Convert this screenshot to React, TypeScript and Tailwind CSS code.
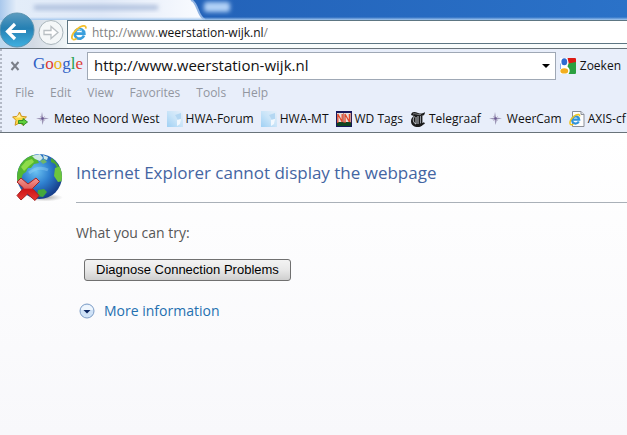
import { ReactNode, useState } from 'react'

const MENUS = ['File', 'Edit', 'View', 'Favorites', 'Tools', 'Help']

const GOOGLE = [
  ['G', 'text-[#2f5fc4]'],
  ['o', 'text-[#dc3b34]'],
  ['o', 'text-[#eeb211]'],
  ['g', 'text-[#2f5fc4]'],
  ['l', 'text-[#1fa04f]'],
  ['e', 'text-[#dc3b34]'],
]

function IeIcon() {
  return (
    <svg viewBox="0 0 16 16" className="h-4 w-4 shrink-0">
      <path d="M13 10.600A4.800 4.800 0 1 1 13.300 8.600H5.200" fill="none" stroke="#3a9fdc" strokeWidth="2.700" />
      <path d="M4.600 6.400A4 4 0 0 1 11 5.600" fill="none" stroke="#8fd3f7" strokeWidth="1" />
      <path d="M1.600 14.200C-.8 11.600 3.600 5 8.600 2.200 12 .3 15.600.1 14.700 3.600" fill="none" stroke="#f3bf2c" strokeWidth="1.800" />
      <path d="M1.600 14.200c1 .9 2.600.2 4-.7" fill="none" stroke="#f3bf2c" strokeWidth="1.600" />
    </svg>
  )
}

function IePageIcon() {
  return (
    <svg viewBox="0 0 16 16" className="h-4 w-4 shrink-0">
      <path d="M3.500.5h8.500l3 3v12H3.500z" fill="#fdfdfd" stroke="#8b8f98" />
      <path d="M12 .5v3h3" fill="#e3e6ea" stroke="#8b8f98" />
      <path d="M9.800 10.600A3.600 3.600 0 1 1 10.200 8.600H4" fill="none" stroke="#2f93db" strokeWidth="2.200" />
      <path d="M1.400 13.500C-.2 10.600 3 6 6.600 4.200 9 3 11 3.200 10.500 5.400M1.400 13.500c.8.600 2 .1 3-.4" fill="none" stroke="#f0c41c" strokeWidth="1.500" />
    </svg>
  )
}

function SparkIcon() {
  return (
    <svg viewBox="0 0 16 16" className="h-4 w-4 shrink-0">
      <path d="M7 1l1 5.500 6 .8-5 1.200L7.500 14l-.9-5.300L1 7.600l5-.9z" fill="#9b93b4" />
      <path d="M5 5l5 5M10 5l-5 5" stroke="#c0b8d2" strokeWidth=".8" />
      <circle cx="7.500" cy="7.500" r="1.300" fill="#6a5a92" />
    </svg>
  )
}

function SkyIcon() {
  return (
    <svg viewBox="0 0 16 16" className="h-4 w-4 shrink-0">
      <defs>
        <linearGradient id="sky" x1="0" y1="1" x2="1" y2="0">
          <stop offset="0" stopColor="#9fd0f4" />
          <stop offset=".5" stopColor="#c9e4f8" />
          <stop offset="1" stopColor="#e6eff9" />
        </linearGradient>
      </defs>
      <rect width="16" height="16" fill="url(#sky)" />
      <path d="M8 4l6-2v6l-3 1z" fill="#b4d7f2" />
      <path d="M10 9l4-1-1 5-3 2z" fill="#f2f8fe" />
    </svg>
  )
}

function WdIcon() {
  return (
    <svg viewBox="0 0 16 16" className="h-4 w-4 shrink-0">
      <rect width="16" height="16" fill="#17195c" />
      <rect x="1" y="2" width="14" height="9" fill="#e7e0dc" />
      <rect x="1" y="11" width="14" height="4" fill="#0d4420" />
      <path d="M1.800 12V3l4.400 8V3M9 12V3l4.400 8V3" fill="none" stroke="#e0482c" strokeWidth="1.300" />
      <path d="M7.500 2v10M14.800 2v10" stroke="#a43a30" strokeWidth=".6" />
    </svg>
  )
}

function TelegraafIcon() {
  return (
    <svg viewBox="0 0 16 16" className="h-4 w-4 shrink-0">
      <path d="M1 4C2 0 5 1 8 2s5 .5 7-1c0 3-2 4-4 4h-1v7c1 1 3 1 4-1-.5 3-3 5-6 5-4 0-7-2-7-6 0-2 1-4 3-5z" fill="#1b1b1b" />
      <path d="M4.500 5.500C2.500 8 3 12 6 13V6M8 5v8" fill="none" stroke="#eef2fa" strokeWidth=".8" />
      <path d="M11.500 5v8.500l3-1.500" fill="none" stroke="#1b1b1b" strokeWidth="1.800" />
      <path d="M3 3c2-1 5 1 8 .7" fill="none" stroke="#c5c8cf" strokeWidth=".6" />
    </svg>
  )
}

function AddFavoriteIcon() {
  return (
    <svg viewBox="0 0 16 16" className="h-4 w-4 shrink-0">
      <path d="M7.500 1l2 4.300 5 .6-3.600 3.400.9 5-4.300-2.400-4.400 2.400.9-5L.6 5.900l4.900-.6z" fill="#fcd94a" stroke="#cf9320" />
      <path d="M7.500 3l1.200 3 2.800.4H4z" fill="#fff3b0" />
      <path d="M6.500 9.500h4.500v-2L15.500 11 11 14.500v-2H6.500z" fill="#5fd03c" stroke="#2c8a20" strokeWidth=".9" />
    </svg>
  )
}

function GoogleIcon() {
  return (
    <svg viewBox="0 0 16 16" className="h-4 w-4 shrink-0">
      <rect width="16" height="16" rx="1" fill="#fff" />
      <path d="M7.500 0H15a1 1 0 0 1 1 1v4.500L9 6.500z" fill="#dc1b14" />
      <path d="M8.500 5.500L16 4v11a1 1 0 0 1-1 1H8.500c2-3 1.500-5-1-7.500z" fill="#2ba040" />
      <path d="M0 5.500h1V11H0z" fill="#8ab1ea" />
      <ellipse cx="4.300" cy="3.700" rx="2.900" ry="3.500" fill="#2f6bd0" />
      <ellipse cx="4.300" cy="12.900" rx="3.900" ry="2.700" fill="#f2ae1e" />
    </svg>
  )
}

function GlobeErrorIcon() {
  return (
    <svg viewBox="0 0 48 50" className="h-[50px] w-12 shrink-0" aria-hidden="true">
      <defs>
        <radialGradient id="sea" cx="42%" cy="38%" r="62%">
          <stop offset="0" stopColor="#6cc3f2" />
          <stop offset=".5" stopColor="#2f80cf" />
          <stop offset="1" stopColor="#173f8c" />
        </radialGradient>
        <linearGradient id="cross" x1="0" y1="0" x2="0" y2="1">
          <stop offset="0" stopColor="#f39a95" />
          <stop offset=".45" stopColor="#e2605b" />
          <stop offset=".5" stopColor="#cd1417" />
          <stop offset="1" stopColor="#e83a35" />
        </linearGradient>
        <radialGradient id="shade">
          <stop offset="0" stopColor="#777" stopOpacity=".7" />
          <stop offset="1" stopColor="#999" stopOpacity="0" />
        </radialGradient>
        <clipPath id="disc"><circle cx="23.500" cy="23.500" r="22.500" /></clipPath>
      </defs>
      <ellipse cx="29" cy="44.500" rx="18" ry="4" fill="url(#shade)" />
      <circle cx="23.500" cy="23.500" r="22.500" fill="url(#sea)" />
      <g clipPath="url(#disc)">
        <path d="M1 20C3 10 9 4 17 2l6 1-2 3 2 4-5 1-3 4-3 0-2 4-3 2-2 6-5 2z" fill="#54b632" />
        <path d="M5 14l5-6 6-2 2 3-5 4-5 5z" fill="#8edc4a" />
        <path d="M16 3l8-2 3 4-3 3-5-2zM27 2l5 2-1 3-3-1z" fill="#cfe8e6" />
        <path d="M24 8l4-2 3 3-4 2z" fill="#6fb56a" />
        <path d="M35 5c4 2 7 6 9 11l-3-1-2-4-4-2z" fill="#4aa733" />
        <path d="M39 15l6-2 3 9-1 6-5 1-4-6z" fill="#6cc63d" />
        <path d="M22 37l6-1 3 3-4 5-6-1z" fill="#44a83b" />
        <path d="M13 20c6-5 13-6 19-3" fill="none" stroke="#b2e4fa" strokeWidth="3" opacity=".3" />
      </g>
      <path d="M5 25l7 6 8-6 3.500 3.500-7 7 6.500 7-4 5-7.500-6.500L5 47l-4-4.500L7.500 35 1 29z" fill="url(#cross)" stroke="#a82222" strokeWidth="1" />
    </svg>
  )
}

const FAVORITES: { name: string; icon: ReactNode }[] = [
  { name: 'Meteo Noord West', icon: <SparkIcon /> },
  { name: 'HWA-Forum', icon: <SkyIcon /> },
  { name: 'HWA-MT', icon: <SkyIcon /> },
  { name: 'WD Tags', icon: <WdIcon /> },
  { name: 'Telegraaf', icon: <TelegraafIcon /> },
  { name: 'WeerCam', icon: <SparkIcon /> },
  { name: 'AXIS-cf', icon: <IePageIcon /> },
]

function TitleBar() {
  return (
    <div className="relative h-5 shrink-0 bg-gradient-to-r from-[#1f5bb2] to-[#2b72c8]">
      <svg viewBox="0 0 240 20" className="h-5 w-60" aria-hidden="true">
        <defs>
          <linearGradient id="tab" x1="0" y1="0" x2="1" y2="0">
            <stop offset="0" stopColor="#a9c8ec" />
            <stop offset=".08" stopColor="#e3edf9" />
            <stop offset=".5" stopColor="#dfe8f7" />
            <stop offset="1" stopColor="#fafcff" />
          </linearGradient>
          <filter id="soft" x="-20%" y="-60%" width="140%" height="220%"><feGaussianBlur stdDeviation="2" /></filter>
        </defs>
        <path d="M0 0h191c7 2 6 16 14 20H0z" fill="url(#tab)" />
        <path d="M191 0c7 2 6 16 14 20" fill="none" stroke="#8fb3e2" strokeWidth="2" />
        <rect x="34" y="5" width="124" height="5" fill="#9aaed2" opacity=".7" filter="url(#soft)" />
        <rect x="204" y="2" width="26" height="10" rx="3" fill="#b0d0f6" filter="url(#soft)" />
      </svg>
      <div className="absolute inset-x-0 bottom-0 h-[3px] bg-gradient-to-b from-transparent to-[#a5c8ee]" />
    </div>
  )
}

function NavBar() {
  return (
    <div className="relative flex h-7 bg-[#f8fcfc]">
      <div className="relative w-[67px] shrink-0 bg-gradient-to-r from-[#bcd8ee] via-[#d3dae4] to-[#f1f7f8]">
        <button aria-label="Back" className="absolute -top-2 -left-px">
          <svg viewBox="0 0 36 36" className="h-9 w-9">
            <defs>
              <linearGradient id="back" x1="0" y1="0" x2="0" y2="1">
                <stop offset="0" stopColor="#5d9cc0" />
                <stop offset=".45" stopColor="#2580b3" />
                <stop offset="1" stopColor="#3fb0e0" />
              </linearGradient>
            </defs>
            <circle cx="18" cy="18" r="17" fill="url(#back)" stroke="#5a93b0" />
            <path d="M27 19.500H9M16 12l-7.500 7.500L16 27" fill="none" stroke="#fff" strokeWidth="3.200" />
          </svg>
        </button>
        <button aria-label="Forward" className="absolute top-0 left-[38px]">
          <svg viewBox="0 0 26 26" className="h-[26px] w-[26px]">
            <circle cx="13" cy="12.500" r="12" fill="#f4f7f8" stroke="#a9b5bb" />
            <path d="M6 10.500h7v-4l7 6-7 6v-4H6z" fill="#fff" stroke="#b9bfc3" strokeWidth="1.300" />
          </svg>
        </button>
      </div>
      <div className="flex h-6 min-w-0 flex-1 items-center gap-[5px] border border-r-0 border-[#5d7683] bg-white pt-px pl-[3px] text-[12px]">
        <IeIcon />
        <div className="whitespace-nowrap text-[#7f7f7f]">
          http://www.<span className="text-[#111]">weerstation-wijk.nl</span>/
        </div>
      </div>
    </div>
  )
}

function Toolbars() {
  const [url, setUrl] = useState('http://www.weerstation-wijk.nl')

  return (
    <div className="overflow-hidden border-y border-[#69737a] bg-[#e8eefa]">
      <div className="border-l-2 border-dotted border-[#b3b9c6]">
        <div className="flex h-8 items-center pt-px">
          <button aria-label="Close toolbar" className="ml-2 shrink-0">
            <svg viewBox="0 0 10 10" className="h-[10px] w-[10px]">
              <path d="M1.500 1l7 8M8.500 1l-7 8" stroke="#7b7f88" strokeWidth="2" />
            </svg>
          </button>
          <span className="ml-[13px] w-[54px] shrink-0 pb-1 font-['Liberation_Serif',serif] text-[17px] leading-6 font-medium">
            {GOOGLE.map(([letter, color], i) => (
              <span key={i} className={color}>{letter}</span>
            ))}
          </span>
          <div className="flex h-7 min-w-0 flex-1 items-center border border-[#9fa8b5] bg-white">
            <input aria-label="Search" value={url} onChange={e => setUrl(e.target.value)}
              className="min-w-0 flex-1 pl-[6px] text-[15px] text-[#111] outline-none" />
            <button aria-label="Show history" className="px-[5px]">
              <svg viewBox="0 0 8 4" className="h-1 w-2"><path d="M0 0h8L4 4z" fill="#000" /></svg>
            </button>
          </div>
          <button className="ml-1 flex shrink-0 items-center gap-1 text-[12px] text-[#111]">
            <GoogleIcon />
            Zoeken
            <svg viewBox="0 0 8 4" className="-mr-2 ml-[2px] h-1 w-2"><path d="M0 0h8L4 4z" fill="#000" /></svg>
          </button>
        </div>
        <nav className="flex h-6 items-center gap-4 pl-[13px] text-[12px] text-[#92969f]">
          {MENUS.map(m => <button key={m}>{m}</button>)}
        </nav>
        <div className="flex h-[27px] items-center gap-[7px] pl-[10px] text-[12px] whitespace-nowrap text-[#111]">
          <button aria-label="Add to favorites"><AddFavoriteIcon /></button>
          {FAVORITES.map(f => (
            <a key={f.name} href="#" className="flex shrink-0 items-center gap-[3px]">
              {f.icon}
              {f.name}
            </a>
          ))}
        </div>
      </div>
    </div>
  )
}

export default function App() {
  return (
    <div className="flex min-h-screen flex-col overflow-hidden bg-white font-['Open_Sans',sans-serif]">
      <TitleBar />
      <NavBar />
      <Toolbars />
      <main className="flex flex-1 gap-3 bg-gradient-to-b from-white to-[#f8f8fb] pt-5 pl-4">
        <GlobeErrorIcon />
        <div className="min-w-0 flex-1">
          <h1 className="border-b border-[#a9b0b8] pt-2 pb-[17px] text-[17px] leading-6 text-[#4465a2]">
            Internet Explorer cannot display the webpage
          </h1>
          <p className="mt-5 text-[14px] leading-5 text-[#575757]">What you can try:</p>
          <button className="mt-4 ml-2 h-[22px] rounded-[3px] border border-[#707070] bg-gradient-to-b from-[#f3f3f3] via-[#e8e8e8] to-[#cfcfcf] px-[11px] font-['Liberation_Sans',sans-serif] text-[13px] leading-5 text-black">
            Diagnose Connection Problems
          </button>
          <a href="#" className="mt-5 ml-[3px] flex items-center gap-[9px] text-[14px] leading-5 text-[#2470b0]">
            <svg viewBox="0 0 16 16" className="h-4 w-4">
              <circle cx="8" cy="8" r="7" fill="#cfe2f7" stroke="#7d9cc5" />
              <path d="M2 7a6 5 0 0 1 12 0z" fill="#eff6fd" />
              <path d="M4.500 7h7L8 10.500z" fill="#0b2560" />
            </svg>
            More information
          </a>
        </div>
      </main>
    </div>
  )
}
